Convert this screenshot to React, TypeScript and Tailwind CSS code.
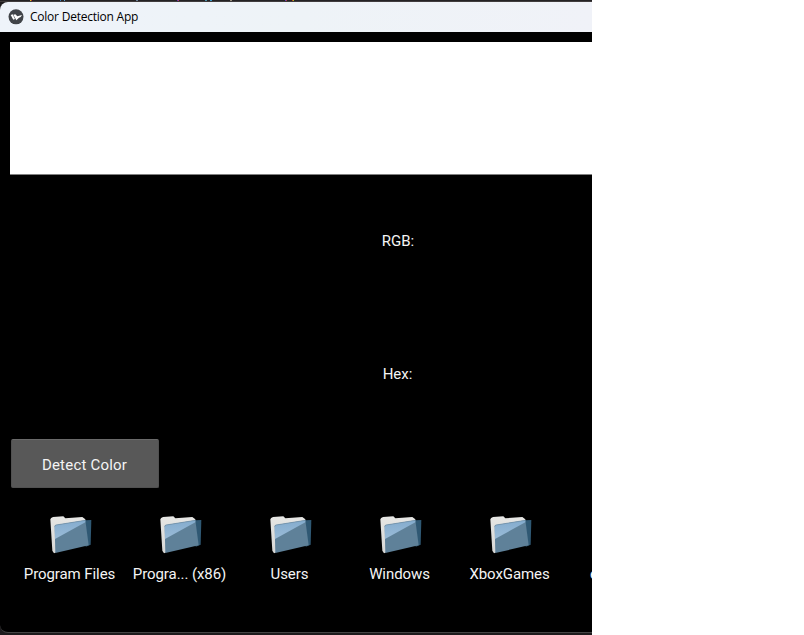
import React from "react";

const folders = ["Program Files", "Progra... (x86)", "Users", "Windows", "XboxGames"];

// Syntax-coloured glyph tips of the editor that sits behind the window
const specks = [
  { x: 30, w: 1, c: "#c8d020" },
  { x: 31, w: 1, c: "#c03030" },
  { x: 60, w: 1, c: "#3a7ab8" },
  { x: 64, w: 1, c: "#5aa0d0" },
  { x: 136, w: 2, c: "#6a7f98" },
  { x: 177, w: 1, c: "#6030c0" },
  { x: 178, w: 1, c: "#c04050" },
  { x: 205, w: 2, c: "#4a90a8" },
  { x: 210, w: 2, c: "#3a9ac8" },
  { x: 230, w: 2, c: "#9a9080" },
  { x: 285, w: 1, c: "#6040c0" },
  { x: 286, w: 1, c: "#b04040" },
  { x: 292, w: 1, c: "#c04020" },
  { x: 293, w: 1, c: "#a0c020" },
];

function Folder() {
  return (
    <svg width="50" height="50" viewBox="0 0 150 150" className="block shrink-0">
      <defs>
        <linearGradient id="paper" x1="0" y1="0" x2="0" y2="1">
          <stop offset="0" stopColor="#e6e6e4" />
          <stop offset="1" stopColor="#d8d8d6" />
        </linearGradient>
        <linearGradient id="shine" x1="0" y1="0" x2="0" y2="1">
          <stop offset="0" stopColor="#84acce" />
          <stop offset="1" stopColor="#9bbcd8" />
        </linearGradient>
      </defs>
      <path d="M16 28 Q17 24 24 21 L55 19 L61 25 L112 21 L121 28 L121 60 L31 128 L27 130 L22 122 Z" fill="url(#paper)" />
      <path d="M119 31 L139 30 L137 104 L122 110 Z" fill="#2f5873" />
      <path d="M29 50 Q29 46 33 45 L121 31 L131 106 L31 129 Z" fill="#5f8199" />
      <path d="M29 50 Q29 46 33 45 L121 31 L121 37 L30 87 Z" fill="url(#shine)" />
      <path d="M29 50 Q29 46 33 45 L121 31" stroke="#6b8ba3" strokeWidth="2" fill="none" />
    </svg>
  );
}

function Logo() {
  return (
    <svg width="16" height="16" viewBox="0 0 48 48" className="block shrink-0">
      <circle cx="24" cy="23.5" r="22.5" fill="#414449" />
      <path d="M8 18 L14 16 L21 30 L16 32 Z" fill="#fff" />
      <path d="M16 17 L22 16 L28 22 L42 18 L38 24 L33 26 L25 34 Z" fill="#fff" />
    </svg>
  );
}

export default function App() {
  return (
    <div className="h-[635px] w-[804px] overflow-hidden bg-white">
      <div className="flex h-[635px] w-[592px] flex-col overflow-hidden bg-[#1d1b1d] font-['Roboto',sans-serif] text-[15px] text-[#f4f4f4]">
        <div className="relative h-[2px] shrink-0 border-b border-[#403c3d] bg-[#242224]">
          {specks.map((s) => (
            <i key={s.x} className="absolute top-0 h-px" style={{ left: s.x, width: s.w, background: s.c }} />
          ))}
        </div>
        <div className="flex h-[631px] shrink-0 flex-col overflow-hidden rounded-l-lg border-b border-[#444] bg-black">
          <header className="flex h-[30px] shrink-0 items-center gap-[6px] bg-linear-to-r from-[#eef3fa] via-[#eef3f7] to-[#f0f2f8] pb-px pl-2 font-['Open_Sans','Noto_Sans',sans-serif] text-[12px] text-black">
            <Logo />
            <span className="whitespace-nowrap pt-px tracking-[-0.23px]">Color Detection App</span>
          </header>
          <main className="flex flex-1 flex-col pl-[10px] pt-[10px]">
            <div className="h-[133px] shrink-0 border-b border-[#808080] bg-white" />
            <div className="flex h-[132px] w-[776px] shrink-0 items-center justify-center">RGB:</div>
            <div className="flex h-[133px] w-[775px] shrink-0 items-center justify-center pt-[2px]">Hex:</div>
            <button className="ml-px mt-[-1px] flex h-[49px] w-[148px] shrink-0 items-center justify-center rounded-[2px] border border-[#505050] border-t-[#6a6a6a] bg-[#585858] pr-px pt-[4px] tracking-[0.2px]">
              Detect Color
            </button>
            <div className="ml-[5px] mt-[22px] flex">
              {folders.map((name) => (
                <div key={name} className="flex w-[110px] shrink-0 flex-col items-center">
                  <Folder />
                  <span className="mt-[4px] whitespace-nowrap pr-px leading-[20px] tracking-[-0.08px]">{name}</span>
                </div>
              ))}
              {/* First letter of the next entry, at the window's edge */}
              <div className="flex shrink-0 flex-col pl-[25px] pt-[54px]">
                <span className="leading-[20px]">e</span>
              </div>
            </div>
          </main>
        </div>
      </div>
    </div>
  );
}
